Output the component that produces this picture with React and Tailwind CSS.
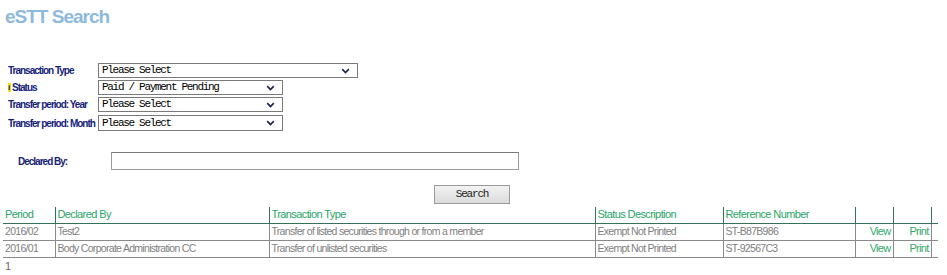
import React from 'react';

const FILTERS = [
  { label: 'Transaction Type', value: 'Please Select', wide: true },
  { label: 'Status', value: 'Paid / Payment Pending', info: true },
  { label: 'Transfer period: Year', value: 'Please Select' },
  { label: 'Transfer period: Month', value: 'Please Select' },
];

const ROWS = [
  { period: '2016/02', by: 'Test2', type: 'Transfer of listed securities through or from a member', status: 'Exempt Not Printed', ref: 'ST-B87B986' },
  { period: '2016/01', by: 'Body Corporate Administration CC', type: 'Transfer of unlisted securities', status: 'Exempt Not Printed', ref: 'ST-92567C3' },
];

function Chevron() {
  return (
    <svg width="9" height="6" viewBox="0 0 9 6" className="shrink-0">
      <path d="M1.2 1.2 L4.5 4.5 L7.8 1.2" fill="none" stroke="#1b2450" strokeWidth="1.7" />
    </svg>
  );
}

function FakeSelect({ value, wide }) {
  return (
    <div
      className={`${wide ? 'w-[260px]' : 'w-[185px]'} h-full border border-[#7a7a7a] bg-white flex items-center justify-between pl-[3px] pr-[7px]`}
    >
      <span className="font-['Liberation_Mono',monospace] text-[11px] tracking-[-1.3px] text-black leading-none">{value}</span>
      <Chevron />
    </div>
  );
}

export default function App() {
  const label = "font-['Liberation_Sans',Arial,sans-serif] font-bold text-[10px] tracking-[-1px] text-[#17227a]";
  const th = 'h-[16px] px-[2px] text-left font-normal text-[11px] tracking-[-0.6px] text-[#27a567] align-middle';
  const td = 'h-[17px] px-[2px] text-[10.5px] tracking-[-0.7px] text-[#808080] align-middle';

  return (
    <div className="w-[947px] h-[275px] bg-white font-['Liberation_Sans',Arial,sans-serif] overflow-hidden">
      <h1 className="pl-[5px] pt-[6px] text-[19px] tracking-[-1px] font-bold text-[#8db9dd] leading-[22px]">eSTT Search</h1>

      {/* filters */}
      <div className="mt-[35px] pl-[8px] flex flex-col">
        {FILTERS.map((f, i) => (
          <div key={f.label} className={`flex items-center ${i === 3 ? 'h-[16px] mt-[3px]' : 'h-[15px]'} ${i === 1 || i === 2 ? 'mt-[2px]' : ''}`}>
            <div className={`w-[90px] flex items-center ${label}`}>
              {f.info && (
                <span className="inline-block w-[3px] h-[9px] bg-[#f5e600] text-[8px] leading-[9px] text-[#14206e] mr-[1px]">i</span>
              )}
              <span>{f.label}</span>
            </div>
            <FakeSelect value={f.value} wide={f.wide} />
          </div>
        ))}
      </div>

      <div className="mt-[21px] pl-[18px] flex items-center h-[18px]">
        <div className={`w-[93px] ${label}`}>Declared By:</div>
        <div className="w-[408px] h-full border border-[#9a9a9a] border-t-[#7a7a7a] bg-white" />
      </div>

      <div className="mt-[15px] pl-[434px] flex">
        <button className="w-[76px] h-[19px] border border-[#9a9a9a] bg-gradient-to-b from-[#f2f2f2] to-[#dcdcdc] font-['Liberation_Mono',monospace] text-[11px] tracking-[-1.2px] text-[#222] leading-none">
          Search
        </button>
      </div>

      {/* results */}
      <table className="mt-[3px] ml-[3px] w-[935px] border-collapse table-fixed leading-none">
        <colgroup>
          <col className="w-[52px]" />
          <col className="w-[214px]" />
          <col className="w-[326px]" />
          <col className="w-[128px]" />
          <col className="w-[132px]" />
          <col className="w-[38px]" />
          <col className="w-[38px]" />
          <col className="w-[7px]" />
        </colgroup>
        <thead>
          <tr className="border-b border-[#35705a]">
            <th className={th}>Period</th>
            <th className={`${th} border-l border-[#35705a]`}>Declared By</th>
            <th className={`${th} border-l border-[#35705a]`}>Transaction Type</th>
            <th className={`${th} border-l border-[#35705a]`}>Status Description</th>
            <th className={`${th} border-l border-[#35705a]`}>Reference Number</th>
            <th className={`${th} border-l border-[#35705a]`} />
            <th className={`${th} border-l border-[#35705a]`} />
            <th className={`${th} border-l border-[#35705a]`} />
          </tr>
        </thead>
        <tbody>
          {ROWS.map((r) => (
            <tr key={r.ref} className="border-b border-[#8a8a8a]">
              <td className={td}>{r.period}</td>
              <td className={`${td} border-l border-[#8a8a8a]`}>{r.by}</td>
              <td className={`${td} border-l border-[#8a8a8a] whitespace-nowrap`}>{r.type}</td>
              <td className={`${td} border-l border-[#8a8a8a]`}>{r.status}</td>
              <td className={`${td} border-l border-[#8a8a8a]`}>{r.ref}</td>
              <td className={`${td} border-l border-[#8a8a8a] text-right !text-[11px] !text-[#35a86c]`}>View</td>
              <td className={`${td} border-l border-[#8a8a8a] text-right !text-[11px] !text-[#35a86c]`}>Print</td>
              <td className={`${td} border-l border-[#8a8a8a]`} />
            </tr>
          ))}
        </tbody>
      </table>
      <div className="pl-[5px] pt-[3px] text-[11px] text-[#7a6060] leading-none">1</div>
    </div>
  );
}
